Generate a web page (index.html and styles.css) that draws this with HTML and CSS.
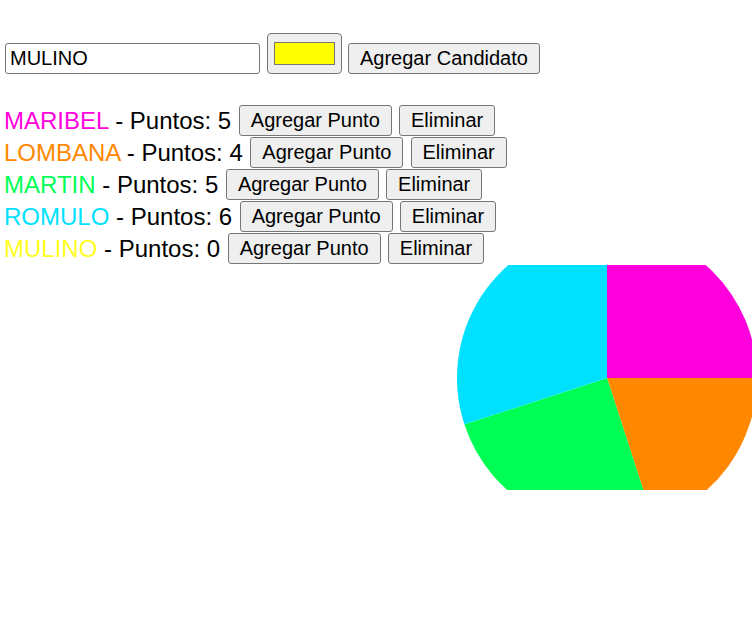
FILE: index.html
```html
<!DOCTYPE html>
<html lang="es">
<head>
<meta charset="utf-8">
<title>Votación</title>
<link rel="stylesheet" href="styles.css">
</head>
<body>
<div class="page">
  <div class="form">
    <input class="name-input" type="text" value="MULINO">
    <input class="color-input" type="color" value="#ffff00">
    <button class="btn">Agregar Candidato</button>
  </div>
  <div class="list">
    <div class="row"><span class="label"><span class="c-maribel">MARIBEL</span> - Puntos: 5</span><button class="btn">Agregar Punto</button><button class="btn">Eliminar</button></div>
    <div class="row"><span class="label"><span class="c-lombana">LOMBANA</span> - Puntos: 4</span><button class="btn">Agregar Punto</button><button class="btn">Eliminar</button></div>
    <div class="row"><span class="label"><span class="c-martin">MARTIN</span> - Puntos: 5</span><button class="btn">Agregar Punto</button><button class="btn">Eliminar</button></div>
    <div class="row"><span class="label"><span class="c-romulo">ROMULO</span> - Puntos: 6</span><button class="btn">Agregar Punto</button><button class="btn">Eliminar</button></div>
    <div class="row"><span class="label"><span class="c-mulino">MULINO</span> - Puntos: 0</span><button class="btn">Agregar Punto</button><button class="btn">Eliminar</button></div>
  </div>
  <div class="chart">
    <svg class="pie" width="300" height="225" viewBox="0 0 300 225">
      <path d="M150 113 L150 -37 A150 150 0 0 1 300 113 Z" fill="#ff00dd"/>
      <path d="M150 113 L300 113 A150 150 0 0 1 196.35 255.66 Z" fill="#ff8800"/>
      <path d="M150 113 L196.35 255.66 A150 150 0 0 1 7.34 159.35 Z" fill="#00ff55"/>
      <path d="M150 113 L7.34 159.35 A150 150 0 0 1 150 -37 Z" fill="#00e1ff"/>
    </svg>
  </div>
</div>
</body>
</html>
```
FILE: styles.css
```css
html, body {
  margin: 0;
  padding: 0;
  background: #ffffff;
  overflow: hidden;
}

.page {
  padding: 33px 0 0 4px;
  font-family: "Liberation Sans", Arial, sans-serif;
  color: #000000;
}

.form {
  display: flex;
  align-items: flex-end;
}

.name-input {
  box-sizing: border-box;
  width: 255px;
  height: 31px;
  margin: 0 0 0 1px;
  padding: 2px 4px;
  border: 1px solid #767676;
  border-radius: 3px;
  font-family: "Liberation Sans", Arial, sans-serif;
  font-size: 20px;
  color: #000000;
  background: #ffffff;
  outline: none;
}

.color-input {
  box-sizing: border-box;
  width: 75px;
  height: 41px;
  margin: 0 0 0 7px;
  padding: 0;
  border: 1px solid #767676;
  border-radius: 4px;
  background: #efefef;
  cursor: pointer;
}

.color-input::-webkit-color-swatch-wrapper {
  padding: 8px 6px;
}

.color-input::-webkit-color-swatch {
  border: 1px solid #777777;
  border-radius: 0;
}

.btn {
  box-sizing: border-box;
  height: 31px;
  margin: 0;
  padding: 3px 11px;
  border: 1px solid #767676;
  border-radius: 3px;
  background: #efefef;
  font-family: "Liberation Sans", Arial, sans-serif;
  font-size: 20px;
  line-height: 23px;
  color: #000000;
  white-space: nowrap;
}

.form .btn {
  margin-left: 6px;
}

.list {
  margin-top: 31px;
}

.row {
  display: flex;
  align-items: flex-start;
  height: 32px;
  gap: 7.2px;
}

.label {
  font-size: 24px;
  line-height: 32px;
  white-space: pre;
  margin-right: 0.4px;
}

.c-maribel { color: #ff00dd; }
.c-lombana { color: #ff8800; }
.c-martin { color: #00ff55; }
.c-romulo { color: #00e1ff; }
.c-mulino { color: #ffff22; }

.chart {
  width: 295px;
  height: 225px;
  margin-left: 453px;
  overflow: hidden;
}

.pie {
  display: block;
}
```
